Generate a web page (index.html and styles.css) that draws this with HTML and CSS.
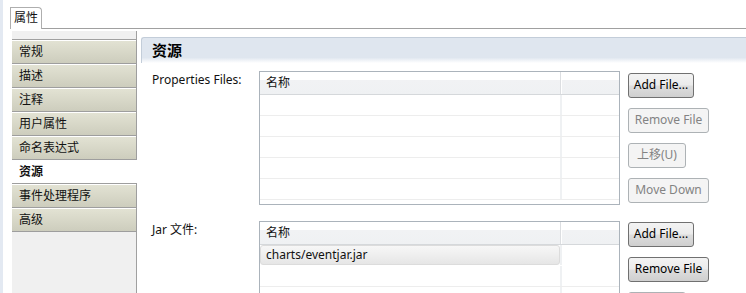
FILE: index.html
```html
<!DOCTYPE html>
<html lang="zh">
<head>
<meta charset="utf-8">
<link rel="stylesheet" href="styles.css">
</head>
<body>
<div class="window">
  <div class="tabbar">
    <div class="tab">属性</div>
    <div class="tabline"></div>
  </div>
  <div class="main">
    <nav class="sidebar">
      <div class="side-top"></div>
      <div class="item">常规</div>
      <div class="item">描述</div>
      <div class="item">注释</div>
      <div class="item">用户属性</div>
      <div class="item">命名表达式</div>
      <div class="item selected">资源</div>
      <div class="item">事件处理程序</div>
      <div class="item">高级</div>
      <div class="side-fill"></div>
    </nav>
    <section class="content">
      <div class="header">资源</div>
      <div class="form">
        <div class="label">Properties Files:</div>
        <div class="table t1">
          <div class="thead"><div class="c1">名称</div><div class="c2"></div></div>
          <div class="tr"><div class="c1"></div><div class="c2"></div></div>
          <div class="tr"><div class="c1"></div><div class="c2"></div></div>
          <div class="tr"><div class="c1"></div><div class="c2"></div></div>
          <div class="tr"><div class="c1"></div><div class="c2"></div></div>
          <div class="tr"><div class="c1"></div><div class="c2"></div></div>
        </div>
        <div class="buttons b1">
          <div class="btn w-add">Add File...</div>
          <div class="btn disabled w-wide">Remove File</div>
          <div class="btn disabled w-up">上移(U)</div>
          <div class="btn disabled w-wide">Move Down</div>
        </div>
        <div class="label">Jar 文件:</div>
        <div class="table t2">
          <div class="thead"><div class="c1">名称</div><div class="c2"></div></div>
          <div class="tr sel"><div class="c1">charts/eventjar.jar</div><div class="c2"></div></div>
          <div class="tr"><div class="c1"></div><div class="c2"></div></div>
          <div class="tr"><div class="c1"></div><div class="c2"></div></div>
        </div>
        <div class="buttons b2">
          <div class="btn w-add">Add File...</div>
          <div class="btn w-wide">Remove File</div>
          <div class="btn disabled w-up"></div>
        </div>
      </div>
    </section>
  </div>
</div>
</body>
</html>
```
FILE: styles.css
```css
html, body {
  margin: 0;
  padding: 0;
}
body {
  width: 746px;
  height: 293px;
  overflow: hidden;
  background: #fff;
  font-family: "Noto Sans", "Noto Sans CJK SC", sans-serif;
  font-size: 12px;
  color: #111;
}
.window {
  height: 293px;
  box-sizing: border-box;
  border-left: 3px solid #e3e9f2;
  padding-top: 2px;
  display: flex;
  flex-direction: column;
}
.tabbar {
  display: flex;
  height: 27px;
  box-sizing: border-box;
  padding-top: 5px;
  padding-left: 7px;
  flex-shrink: 0;
}
.tab {
  width: 32px;
  box-sizing: border-box;
  border: 1px solid #aeaeae;
  border-bottom: none;
  border-top-right-radius: 4px;
  padding-left: 3px;
  line-height: 20px;
  background: #fff;
}
.tabline {
  flex: 1;
  border-bottom: 1px solid #a0a0a0;
}
.main {
  flex: 1;
  display: flex;
  padding-top: 2px;
  min-height: 0;
}
.sidebar {
  margin-left: 9px;
  width: 125px;
  flex-shrink: 0;
  display: flex;
  flex-direction: column;
}
.side-top {
  height: 9px;
  box-sizing: border-box;
  background: #f0f0f0;
  border-right: 1px solid #a0a0a0;
  border-bottom: 1px solid #a0a0a0;
}
.item {
  height: 24px;
  box-sizing: border-box;
  border-bottom: 1px solid #9e9e9e;
  border-right: 1px solid #9e9e9e;
  box-shadow: inset 0 1px #ffffff;
  background: linear-gradient(#e3e3d4, #cdcdbd);
  padding-left: 7px;
  line-height: 23px;
  white-space: nowrap;
}
.item.selected {
  background: #fff;
  border-right: none;
  box-shadow: none;
  font-weight: bold;
}
.side-fill {
  flex: 1;
  background: #f0f0f0;
  border-right: 1px solid #a0a0a0;
}
.content {
  flex: 1;
  padding: 6px 0 0 4px;
  display: flex;
  flex-direction: column;
  min-width: 0;
}
.header {
  height: 30px;
  box-sizing: border-box;
  border-top: 1px solid #c3cdd9;
  border-left: 1px solid #c3cdd9;
  border-top-left-radius: 3px;
  background: linear-gradient(to bottom, #dfe6ef 0, #dfe6ef 78%, #ffffff 100%);
  font-size: 15px;
  font-weight: bold;
  padding-left: 10px;
  line-height: 25px;
  color: #000;
}
.form {
  display: grid;
  grid-template-columns: 107px 361px auto;
  row-gap: 16px;
  margin-top: 8px;
  padding-left: 11px;
  align-items: start;
}
.label {
  padding-top: 1px;
  line-height: 16px;
  white-space: nowrap;
}
.table {
  box-sizing: border-box;
  border: 1px solid #abb3bb;
  overflow: hidden;
}
.t1 { height: 134px; }
.t2 { height: 100px; }
.thead {
  display: flex;
  height: 23px;
  box-sizing: border-box;
  border-bottom: 1px solid #d5d8db;
  background: linear-gradient(#ffffff 0, #ffffff 38%, #f1f2f4 38%, #eff1f3 100%);
}
.thead .c1 {
  width: 300px;
  padding-left: 6px;
  box-sizing: border-box;
  line-height: 22px;
}
.thead .c2 {
  flex: 1;
  border-left: 1px solid #dcdee1;
  box-shadow: inset 1px 0 #ffffff;
}
.tr {
  display: flex;
  height: 21px;
  box-sizing: border-box;
  border-bottom: 1px solid #ededed;
}
.tr .c1 {
  width: 300px;
  box-sizing: border-box;
  padding-left: 6px;
  line-height: 20px;
}
.tr .c2 {
  flex: 1;
  border-left: 2px solid #eff1f3;
}
.tr.sel {
  border-bottom-color: transparent;
}
.tr.sel .c1 {
  background: linear-gradient(#f7f7f7, #e6e6e6);
  border: 1px solid #dcdcdc;
  border-radius: 3px;
  padding-left: 5px;
  line-height: 18px;
}
.buttons {
  display: flex;
  flex-direction: column;
  align-items: flex-start;
  gap: 10px;
  margin-left: 8px;
}
.b1 { padding-top: 2px; }
.b2 { padding-top: 1px; }
.btn {
  height: 25px;
  box-sizing: border-box;
  border: 1px solid #707070;
  border-radius: 3px;
  background: linear-gradient(#f3f3f3 0, #ebebeb 48%, #dddddd 52%, #cfcfcf 100%);
  line-height: 22px;
  text-align: center;
  white-space: nowrap;
  color: #000;
}
.btn.disabled {
  border-color: #adb2b5;
  background: #f4f4f4;
  color: #838383;
}
.w-add { width: 66px; }
.w-wide { width: 81px; }
.w-up { width: 58px; }
```
